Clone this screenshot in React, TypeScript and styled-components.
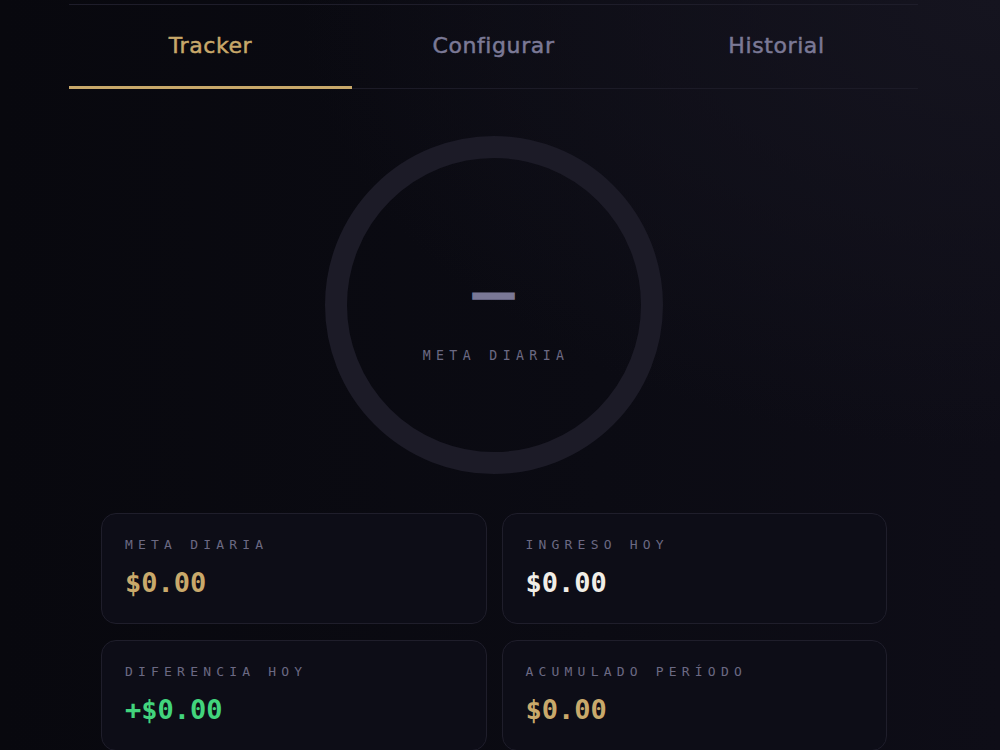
import React, { useState } from "react";
import styled, { createGlobalStyle } from "styled-components";

const GlobalStyle = createGlobalStyle`
  html, body {
    margin: 0;
    padding: 0;
    background: #09090f;
  }
  body {
    min-height: 750px;
    font-family: "DejaVu Sans", sans-serif;
    background:
      radial-gradient(ellipse 70% 60% at 100% 0%, #15141f 0%, rgba(21, 20, 31, 0) 100%),
      linear-gradient(90deg, #08080e 0%, #0b0b13 60%, #0e0d17 100%);
    overflow: hidden;
  }
`;

const Page = styled.div`
  padding-right: 13px;
  height: 750px;
  overflow: hidden;
`;

const Shell = styled.div`
  width: 849px;
  margin: 0 auto;
`;

const TopEdge = styled.div`
  height: 4px;
  border-bottom: 1px solid #1e1d2a;
`;

const TabBar = styled.nav`
  display: grid;
  grid-template-columns: repeat(3, 1fr);
  border-bottom: 1px solid #1c1b27;
`;

const Tab = styled.button<{ $active?: boolean }>`
  height: 84px;
  background: transparent;
  border: none;
  border-bottom: 3px solid ${(p) => (p.$active ? "#c8a86a" : "transparent")};
  margin-bottom: -1px;
  color: ${(p) => (p.$active ? "#c8a86a" : "#7b7996")};
  font-family: "DejaVu Sans", sans-serif;
  font-size: 22px;
  font-weight: 500;
  letter-spacing: 0.6px;
  -webkit-text-stroke: 0.5px currentColor;
  cursor: pointer;
  padding: 0 0 1px;
`;

const RingWrap = styled.div`
  display: grid;
  place-items: center;
  width: 338px;
  height: 338px;
  margin: 47px auto 39px;
  & > * {
    grid-area: 1 / 1;
  }
`;

const RingCenter = styled.div`
  display: flex;
  flex-direction: column;
  align-items: center;
  padding-top: 23px;
`;

const Dash = styled.span`
  font-family: "DejaVu Sans", sans-serif;
  font-weight: bold;
  font-size: 46px;
  line-height: 1;
  color: #7a7896;
  -webkit-text-stroke: 1.5px #7a7896;
`;

const MonoLabel = styled.div`
  font-family: "DejaVu Sans Mono", monospace;
  font-size: 13px;
  letter-spacing: 5.2px;
  text-transform: uppercase;
  color: #6b6983;
`;

const RingLabel = styled(MonoLabel)`
  margin-top: 32px;
  margin-right: -5px;
  font-size: 13.2px;
  letter-spacing: 5.4px;
`;

const Cards = styled.div`
  display: grid;
  grid-template-columns: 1fr 1fr;
  gap: 16px 15px;
  padding: 0 31px 0 32px;
`;

const Card = styled.div`
  height: 111px;
  box-sizing: border-box;
  padding: 23px 22px 0 23px;
  background: #0d0d17;
  border: 1px solid #1f1e2b;
  border-radius: 15px;
`;

const Value = styled.div<{ $tone: "gold" | "light" | "green" }>`
  margin-top: 15px;
  font-family: "DejaVu Sans Mono", monospace;
  font-size: 27px;
  font-weight: bold;
  color: ${(p) =>
    p.$tone === "gold" ? "#c9a96b" : p.$tone === "green" ? "#42d47d" : "#f1eee7"};
`;

const tabs = ["Tracker", "Configurar", "Historial"];

const stats: { label: string; value: string; tone: "gold" | "light" | "green" }[] = [
  { label: "Meta diaria", value: "$0.00", tone: "gold" },
  { label: "Ingreso hoy", value: "$0.00", tone: "light" },
  { label: "Diferencia hoy", value: "+$0.00", tone: "green" },
  { label: "Acumulado período", value: "$0.00", tone: "gold" },
];

export default function App() {
  const [active, setActive] = useState(0);

  return (
    <Page>
      <GlobalStyle />
      <Shell>
        <TopEdge />
        <TabBar>
          {tabs.map((t, i) => (
            <Tab key={t} $active={active === i} onClick={() => setActive(i)}>
              {t}
            </Tab>
          ))}
        </TabBar>

        <RingWrap>
          <svg width="338" height="338" viewBox="0 0 338 338">
            <circle cx="169" cy="169" r="158" fill="none" stroke="#1c1b27" strokeWidth="22" />
          </svg>
          <RingCenter>
            <Dash>—</Dash>
            <RingLabel>Meta diaria</RingLabel>
          </RingCenter>
        </RingWrap>

        <Cards>
          {stats.map((s) => (
            <Card key={s.label}>
              <MonoLabel>{s.label}</MonoLabel>
              <Value $tone={s.tone}>{s.value}</Value>
            </Card>
          ))}
        </Cards>
      </Shell>
    </Page>
  );
}
